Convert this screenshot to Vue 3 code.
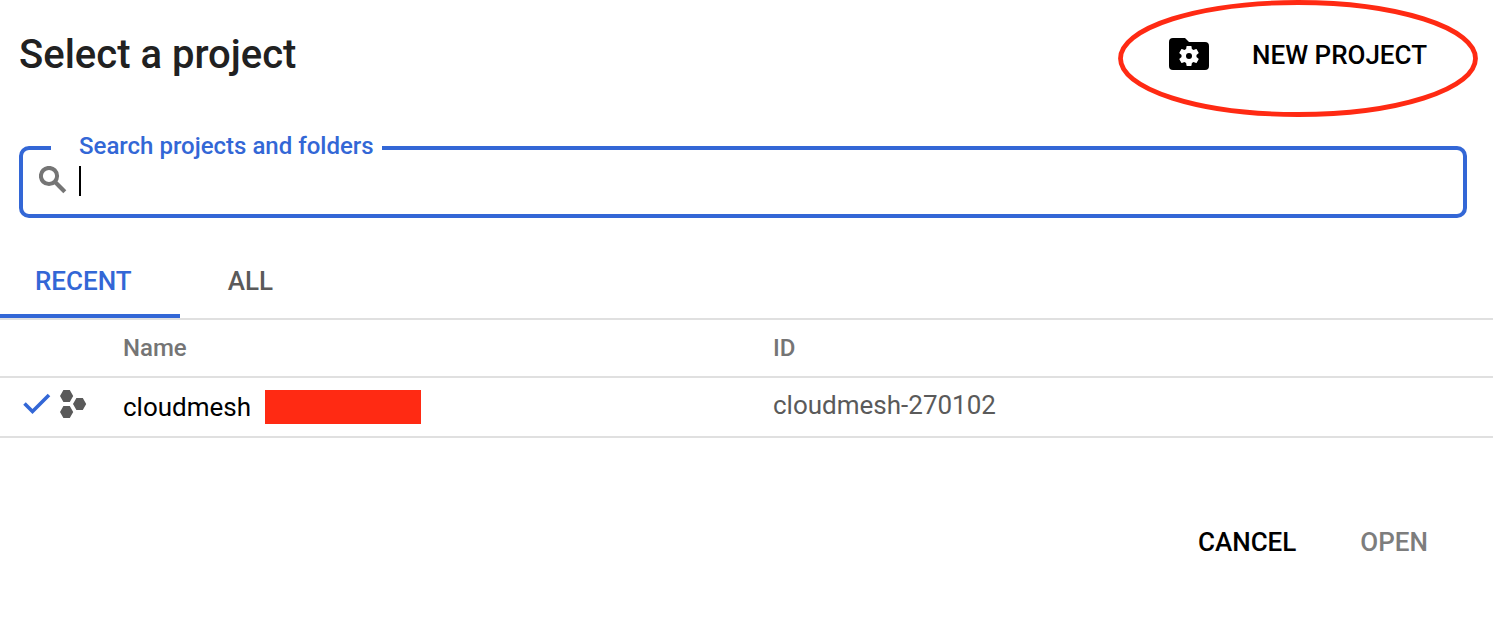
<script setup>
import { ref } from 'vue'

const query = ref('')
const tabs = ['RECENT', 'ALL']
const active = ref('RECENT')
const projects = [{ name: 'cloudmesh', id: 'cloudmesh-270102' }]
</script>

<template>
  <main class="dialog">
    <header class="top">
      <h1>Select a project</h1>
      <button type="button" class="new-project">
        <svg class="folder" viewBox="0 0 40 32" aria-hidden="true">
          <path d="M4 0h12l4 4h16a4 4 0 0 1 4 4v20a4 4 0 0 1-4 4H4a4 4 0 0 1-4-4V4a4 4 0 0 1 4-4z" />
          <path
            fill="#fff"
            transform="translate(8 6)"
            d="M19.43 12.98c.04-.32.07-.64.07-.98s-.03-.66-.07-.98l2.11-1.65c.19-.15.24-.42.12-.64l-2-3.46c-.12-.22-.39-.3-.61-.22l-2.49 1c-.52-.4-1.08-.73-1.69-.98l-.38-2.65C14.46 2.18 14.25 2 14 2h-4c-.25 0-.46.18-.49.42l-.38 2.65c-.61.25-1.17.59-1.69.98l-2.49-1c-.23-.09-.49 0-.61.22l-2 3.46c-.13.22-.07.49.12.64l2.11 1.65c-.04.32-.07.65-.07.98s.03.66.07.98l-2.11 1.65c-.19.15-.24.42-.12.64l2 3.46c.12.22.39.3.61.22l2.49-1c.52.4 1.08.73 1.69.98l.38 2.65c.03.24.24.42.49.42h4c.25 0 .46-.18.49-.42l.38-2.65c.61-.25 1.17-.59 1.69-.98l2.49 1c.23.09.49 0 .61-.22l2-3.46c.12-.22.07-.49-.12-.64l-2.11-1.65z"
          />
          <circle cx="20" cy="18" r="3" />
        </svg>
        <span class="new-label">NEW PROJECT</span>
        <svg class="ring" viewBox="0 0 360 118" aria-hidden="true">
          <ellipse cx="180" cy="58.5" rx="177.5" ry="56" fill="none" stroke="#ff2a13" stroke-width="4.8" />
        </svg>
      </button>
    </header>

    <fieldset class="search">
      <legend><label for="project-search">Search projects and folders</label></legend>
      <div class="search-row">
        <svg class="lens" viewBox="0 0 28 28" aria-hidden="true">
          <circle cx="10" cy="10" r="8.1" fill="none" stroke="#757575" stroke-width="4" />
          <path d="M15.6 15.6l10.2 10.2" fill="none" stroke="#757575" stroke-width="4.2" />
        </svg>
        <span class="caret"></span>
        <input id="project-search" v-model="query" type="text" autocomplete="off" />
      </div>
    </fieldset>

    <nav class="tabs" role="tablist">
      <button
        v-for="tab in tabs"
        :key="tab"
        type="button"
        role="tab"
        class="tab"
        :class="{ active: active === tab }"
        :aria-selected="active === tab"
        @click="active = tab"
      >{{ tab }}</button>
    </nav>

    <table>
      <thead>
        <tr>
          <th class="icons-col"></th>
          <th class="name-col">Name</th>
          <th>ID</th>
        </tr>
      </thead>
      <tbody>
        <tr v-for="p in projects" :key="p.id">
          <td>
            <div class="icons">
              <svg class="check" viewBox="0 0 28 22" aria-hidden="true">
                <path d="M1.5 10.5l8 8L26 2" fill="none" stroke="#3367d6" stroke-width="3.6" />
              </svg>
              <svg class="hexes" viewBox="0 0 28 28" aria-hidden="true">
                <path d="M3.4 0h6.4l3.4 6-3.4 6H3.4L0 6zM3.4 16h6.4l3.4 6-3.4 6H3.4L0 22zM16.4 8h6.4l3.4 6-3.4 6h-6.4L13 14z" fill="#5a5a5a" />
              </svg>
            </div>
          </td>
          <td>
            <div class="name">
              <a href="#">{{ p.name }}</a>
              <span class="redacted"></span>
            </div>
          </td>
          <td class="id">{{ p.id }}</td>
        </tr>
      </tbody>
    </table>

    <footer class="actions">
      <button type="button">CANCEL</button>
      <button type="button" class="muted" disabled>OPEN</button>
    </footer>
  </main>
</template>

<style>
body {
  background: #fff;
}
</style>

<style scoped>
.dialog {
  font-family: Roboto, "Liberation Sans", sans-serif;
  font-size: 26px;
  line-height: 32px;
  color: #000;
}
button {
  padding: 0;
  border: 0;
  background: none;
  font: inherit;
  font-weight: 500;
  color: #000;
}
.top {
  display: flex;
  align-items: center;
  justify-content: space-between;
  padding: 30px 66px 0 19px;
}
h1 {
  margin: 0;
  padding-top: 2px;
  font-size: 40px;
  font-weight: 500;
  line-height: 46px;
  color: #212121;
}
.new-project {
  position: relative;
  display: flex;
  align-items: center;
  gap: 43px;
}
.new-label {
  padding-top: 2px;
  line-height: 30px;
}
.folder {
  width: 40px;
  height: 32px;
}
.ring {
  position: absolute;
  top: -38px;
  left: -51px;
  width: 360px;
  height: 118px;
  pointer-events: none;
}
.search {
  min-width: 0;
  margin: 54px 26px 0 19px;
  padding: 0 16px 18px;
  border: 4px solid #3367d6;
  border-radius: 10px;
}
legend {
  margin-left: 12px;
  padding: 0 8px 4px 28px;
  font-size: 24px;
  font-weight: 500;
  line-height: 28px;
  color: #3367d6;
}
.search-row {
  display: flex;
  align-items: center;
  height: 32px;
}
.lens {
  width: 28px;
  height: 28px;
}
.caret {
  align-self: flex-end;
  width: 2px;
  height: 30px;
  margin-left: 12px;
  background: #000;
}
input {
  flex: 1;
  min-width: 0;
  padding: 0;
  border: 0;
  outline: 0;
  background: none;
  font: inherit;
  caret-color: transparent;
}
.tabs {
  display: flex;
  margin-top: 26px;
  border-bottom: 2px solid #e0e0e0;
}
.tab {
  height: 74px;
  padding: 4px 48px 0;
  border-bottom: 4px solid transparent;
  color: #5a5a5a;
}
.tab:first-child {
  padding-left: 35px;
}
.tab.active {
  border-bottom-color: #3367d6;
  color: #3367d6;
}
table {
  width: 100%;
  table-layout: fixed;
  border-spacing: 0;
}
th,
td {
  height: 56px;
  padding: 0;
  border-bottom: 2px solid #e0e0e0;
  text-align: left;
}
td {
  height: 58px;
}
th {
  font-size: 24px;
  font-weight: 500;
  color: #757575;
}
.icons-col {
  width: 123px;
}
.name-col {
  width: 650px;
}
.icons,
.name {
  display: flex;
  align-items: center;
}
.icons {
  gap: 9px;
  padding: 0 0 6px 23px;
}
.check {
  width: 28px;
  height: 22px;
}
.hexes {
  width: 28px;
  height: 28px;
}
.name {
  gap: 14px;
}
a {
  color: #000;
  text-decoration: none;
}
.redacted {
  width: 156px;
  height: 34px;
  background: #ff2a13;
}
td.id {
  height: 54px;
  padding-bottom: 4px;
  color: #5a5a5a;
}
.actions {
  display: flex;
  justify-content: flex-end;
  gap: 64px;
  padding: 88px 65px 80px;
}
.actions .muted {
  color: #7d7d7d;
}
</style>
